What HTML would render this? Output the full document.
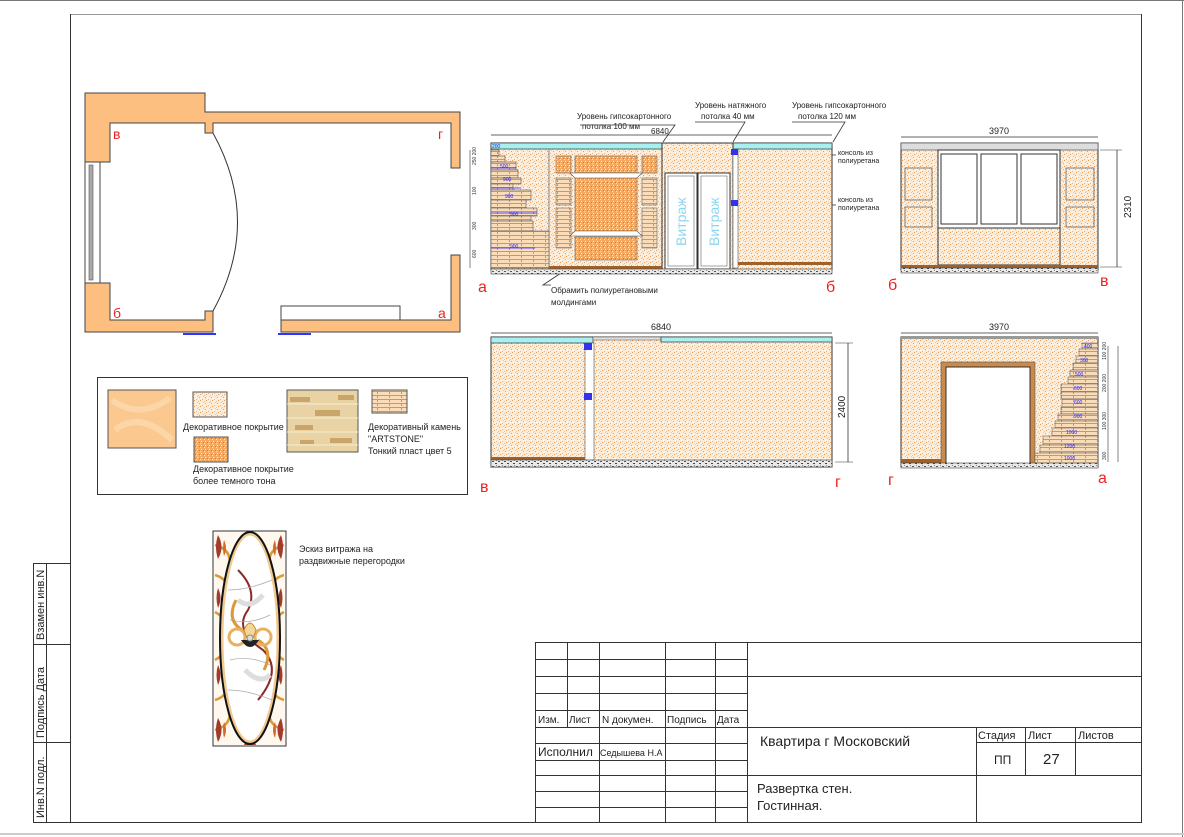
<!DOCTYPE html>
<html><head><meta charset="utf-8"><style>
html,body{margin:0;padding:0;background:#fff;}
svg{display:block;}
text{font-family:"Liberation Sans",sans-serif;}
</style></head><body>
<svg width="1184" height="837" viewBox="0 0 1184 837" xmlns="http://www.w3.org/2000/svg">
<defs>
<pattern id="sp" width="6" height="6" patternUnits="userSpaceOnUse">
<rect width="6" height="6" fill="#fcecda"/>
<rect x="1" y="1" width="1" height="1" fill="#ef9f5c"/><rect x="4" y="3" width="1" height="1" fill="#f2b27c"/><rect x="2" y="4" width="1" height="1" fill="#ec9a52"/><rect x="5" y="0" width="1" height="1" fill="#f4c49a"/><rect x="3" y="2" width="1" height="1" fill="#fff"/><rect x="0" y="5" width="1" height="1" fill="#f5bd8a"/>
</pattern>
<pattern id="dk" width="4" height="4" patternUnits="userSpaceOnUse">
<rect width="4" height="4" fill="#f5a860"/><rect x="1" y="1" width="1" height="1" fill="#fff0e0"/><rect x="3" y="2" width="1" height="1" fill="#e07a28"/><rect x="0" y="3" width="1" height="1" fill="#fde2c4"/>
</pattern>
<pattern id="st" width="12" height="4" patternUnits="userSpaceOnUse">
<rect width="12" height="4" fill="#fbdcb8"/><rect y="3" width="12" height="1" fill="#ec8f3a"/><rect x="5" y="0" width="1" height="2" fill="#ec8f3a"/>
</pattern>
<pattern id="fl" width="6" height="5" patternUnits="userSpaceOnUse">
<rect width="6" height="5" fill="#e9e9e9"/><rect x="0" y="1" width="2" height="1" fill="#555"/><rect x="3" y="3" width="2" height="1" fill="#444"/><rect x="4" y="0" width="1" height="1" fill="#888"/>
</pattern>
</defs>

<line x1="0" y1="0.5" x2="1184" y2="0.5" stroke="#777" stroke-width="1"/>
<line x1="1182.5" y1="0" x2="1182.5" y2="837" stroke="#777"/>
<line x1="0" y1="834" x2="1184" y2="834" stroke="#ccc" stroke-width="2"/>
<line x1="70" y1="14.5" x2="1142" y2="14.5" stroke="#999"/>
<line x1="70.5" y1="14" x2="70.5" y2="823" stroke="#333"/>
<line x1="1141.5" y1="14" x2="1141.5" y2="823" stroke="#333"/>
<line x1="33" y1="822.5" x2="1142" y2="822.5" stroke="#333"/>

<g stroke="#333" fill="none">
<line x1="33.5" y1="563" x2="33.5" y2="823"/><line x1="46.5" y1="563" x2="46.5" y2="823"/>
<line x1="33" y1="563.5" x2="70" y2="563.5"/><line x1="33" y1="644.5" x2="70" y2="644.5"/><line x1="33" y1="742.5" x2="70" y2="742.5"/>
</g>
<g font-size="11" fill="#222">
<text transform="translate(44,640) rotate(-90)">Взамен  инв.N</text>
<text transform="translate(44,738) rotate(-90)">Подпись  Дата</text>
<text transform="translate(44,818) rotate(-90)">Инв.N  подл.</text>
</g>

<g fill="#fdbf80" stroke="#444" stroke-width="1">
<path d="M85 93 H205 V112 H460 V168 H451 V123 H213 V133 H205 V123 H110 V162 H85 Z"/>
<path d="M85 283 H110 V320 H205 V311 H213 V332 H85 Z"/>
<path d="M281 320 H451 V255 H460 V332 H281 Z"/>
</g>
<rect x="85" y="162" width="15" height="121" fill="#fff" stroke="#444"/>
<rect x="89" y="165" width="4" height="115" fill="#aaa" stroke="#555" stroke-width="0.6"/>
<path d="M213 133 Q262 222 213 311" fill="none" stroke="#333"/>
<rect x="281" y="306" width="119" height="14" fill="#fff" stroke="#444"/>
<line x1="183" y1="334" x2="216" y2="334" stroke="#33f" stroke-width="2"/>
<line x1="278" y1="334" x2="311" y2="334" stroke="#33f" stroke-width="2"/>
<g fill="#e22" font-size="14">
<text x="113" y="139">в</text><text x="438" y="139">г</text><text x="113" y="318">б</text><text x="438" y="318">а</text>
</g>

<rect x="97.5" y="377.5" width="370" height="117" fill="#fff" stroke="#333"/>
<rect x="108" y="390" width="68" height="58" fill="#fbc98f" stroke="#555"/>
<path d="M112 400 Q140 420 170 398 M115 430 Q140 410 172 440" stroke="#fde0b5" stroke-width="6" fill="none" opacity=".6"/>
<rect x="193" y="392" width="34" height="25" fill="url(#sp)" stroke="#555"/>
<rect x="194" y="437" width="34" height="25" fill="url(#dk)" stroke="#555"/>
<rect x="287" y="390" width="71" height="62" fill="#e9d3a5" stroke="#555"/>
<g fill="#c9a56a"><rect x="290" y="397" width="20" height="5"/><rect x="315" y="410" width="25" height="6"/><rect x="295" y="425" width="18" height="5"/><rect x="330" y="438" width="22" height="5"/><rect x="338" y="395" width="16" height="5"/><rect x="300" y="440" width="14" height="4"/></g>
<g stroke="#f5ecd8" stroke-width="1"><line x1="287" y1="404" x2="358" y2="404"/><line x1="287" y1="418" x2="358" y2="418"/><line x1="287" y1="432" x2="358" y2="432"/><line x1="287" y1="445" x2="358" y2="445"/></g>
<rect x="372" y="390" width="35" height="23" fill="url(#st)" stroke="#555"/>
<g font-size="9" fill="#222">
<text x="183" y="430">Декоративное покрытие</text>
<text x="193" y="472">Декоративное покрытие</text>
<text x="193" y="484">более темного тона</text>
<text x="368" y="430">Декоративный камень</text>
<text x="368" y="442">"ARTSTONE"</text>
<text x="368" y="454">Тонкий пласт цвет 5</text>
</g>

<g font-size="8" fill="#222">
<text x="577" y="119">Уровень гипсокартонного</text>
<text x="582" y="129">потолка 100 мм</text>
<text x="651" y="134">6840</text>
<text x="695" y="108">Уровень натяжного</text>
<text x="701" y="119">потолка 40 мм</text>
<text x="792" y="108">Уровень гипсокартонного</text>
<text x="798" y="119">потолка 120 мм</text>
<text x="838" y="155" font-size="7">консоль из</text>
<text x="838" y="163" font-size="7">полиуретана</text>
<text x="838" y="202" font-size="7">консоль из</text>
<text x="838" y="210" font-size="7">полиуретана</text>
<text x="551" y="293">Обрамить полиуретановыми</text>
<text x="551" y="305">молдингами</text>
</g>
<g stroke="#333" fill="none" stroke-width="0.8">
<line x1="491" y1="135" x2="832" y2="135"/>
<path d="M580 125 H675 L663 142 M695 122 H745 L733 142 M792 122 H845 L833 142"/>
<line x1="736" y1="155" x2="836" y2="155"/><line x1="736" y1="205" x2="836" y2="205"/>
<path d="M570 267 L543 285 H551"/>
</g>
<rect x="491" y="143" width="341" height="127" fill="url(#sp)" stroke="#333"/>
<rect x="491" y="143" width="171" height="6" fill="#a8f0f0" stroke="#333" stroke-width=".7"/>
<rect x="733" y="143" width="99" height="6" fill="#a8f0f0" stroke="#333" stroke-width=".7"/>
<line x1="549" y1="149" x2="549" y2="268" stroke="#888"/>
<g fill="url(#dk)" stroke="#777" stroke-width=".7">
<rect x="556" y="156" width="15" height="17"/><rect x="575" y="156" width="62" height="17"/><rect x="642" y="156" width="15" height="17"/>
<rect x="575" y="173" width="62" height="63"/><rect x="575" y="237" width="62" height="23"/>
</g>
<g fill="url(#st)" stroke="#777" stroke-width=".7">
<rect x="556" y="178" width="15" height="27"/><rect x="556" y="208" width="15" height="40"/>
<rect x="642" y="178" width="15" height="27"/><rect x="642" y="208" width="15" height="40"/>
</g>
<path d="M570 173 H642 L637 178 H575 Z M570 236 H642 L637 231 H575 Z" fill="#fff" stroke="#555" stroke-width=".6"/>
<g fill="url(#st)" stroke="#555" stroke-width=".6">
<rect x="491" y="150" width="8" height="6"/><rect x="491" y="156" width="14" height="6"/><rect x="491" y="162" width="25" height="8"/>
<rect x="491" y="170" width="27" height="8"/><rect x="491" y="178" width="30" height="6"/><rect x="491" y="184" width="22" height="6"/>
<rect x="491" y="190" width="40" height="10"/><rect x="491" y="200" width="35" height="8"/><rect x="491" y="208" width="46" height="8"/>
<rect x="491" y="216" width="40" height="5"/><rect x="491" y="221" width="42" height="10"/><rect x="491" y="231" width="58" height="37"/>
</g>
<g stroke="#22f" stroke-width=".7"><line x1="491" y1="168" x2="516" y2="168"/><line x1="491" y1="188" x2="521" y2="188"/><line x1="491" y1="213" x2="537" y2="213"/><line x1="491" y1="248" x2="535" y2="248"/></g>
<g font-size="5" fill="#22f"><text x="492" y="148">200</text><text x="500" y="168">500</text><text x="503" y="181">900</text><text x="505" y="198">900</text><text x="510" y="216">900</text><text x="510" y="248">900</text></g>
<g font-size="5" fill="#333"><text transform="translate(476,165) rotate(-90)">250 200</text><text transform="translate(476,195) rotate(-90)">100</text><text transform="translate(476,230) rotate(-90)">300</text><text transform="translate(476,258) rotate(-90)">600</text></g>
<line x1="470" y1="150" x2="470" y2="268" stroke="#333" stroke-width=".6"/>
<rect x="662" y="143" width="71" height="127" fill="url(#sp)" stroke="#333"/>
<rect x="665" y="173" width="32" height="96" fill="#fff" stroke="#333"/><rect x="668" y="176" width="26" height="90" fill="none" stroke="#666" stroke-width=".6"/>
<rect x="698" y="173" width="32" height="96" fill="#fff" stroke="#333"/><rect x="701" y="176" width="26" height="90" fill="none" stroke="#666" stroke-width=".6"/>
<g fill="#8cd6ee" font-size="14"><text transform="translate(686,246) rotate(-90)">Витраж</text><text transform="translate(719,246) rotate(-90)">Витраж</text></g>
<rect x="733" y="149" width="5" height="119" fill="#fff" stroke="#555" stroke-width=".6"/>
<rect x="731" y="149" width="7" height="6" fill="#33e"/><rect x="731" y="200" width="7" height="6" fill="#33e"/>
<rect x="549" y="266" width="113" height="3" fill="#a0602a"/><rect x="738" y="262" width="94" height="3" fill="#a0602a"/>
<rect x="491" y="269" width="341" height="5" fill="url(#fl)" stroke="#444" stroke-width=".6"/>
<g fill="#e22" font-size="16"><text x="478" y="292">а</text><text x="826" y="292">б</text></g>

<text x="989" y="134" font-size="9" fill="#222">3970</text>
<line x1="901" y1="137" x2="1098" y2="137" stroke="#333" stroke-width=".8"/>
<rect x="901" y="143" width="197" height="127" fill="url(#sp)" stroke="#333"/>
<rect x="901" y="143" width="197" height="7" fill="#ddd" stroke="#555" stroke-width=".7"/>
<rect x="938" y="150" width="122" height="115" fill="url(#sp)" stroke="#333"/>
<rect x="938" y="150" width="122" height="78" fill="#fff" stroke="#333"/>
<rect x="941" y="154" width="36" height="70" fill="#fff" stroke="#333"/><rect x="981" y="154" width="36" height="70" fill="#fff" stroke="#333"/><rect x="1021" y="154" width="36" height="70" fill="#fff" stroke="#333"/>
<g fill="none" stroke="#555" stroke-width=".7"><rect x="905" y="168" width="27" height="32"/><rect x="905" y="207" width="27" height="20"/><rect x="1066" y="168" width="28" height="32"/><rect x="1066" y="207" width="28" height="20"/></g>
<rect x="901" y="265" width="197" height="3" fill="#a0602a"/>
<rect x="901" y="268" width="197" height="5" fill="url(#fl)" stroke="#444" stroke-width=".6"/>
<line x1="1117" y1="150" x2="1117" y2="267" stroke="#333" stroke-width=".8"/>
<line x1="1100" y1="150" x2="1122" y2="150" stroke="#333" stroke-width=".6"/><line x1="1100" y1="267" x2="1122" y2="267" stroke="#333" stroke-width=".6"/>
<text transform="translate(1131,218) rotate(-90)" font-size="10" fill="#222">2310</text>
<g fill="#e22" font-size="16"><text x="888" y="290">б</text><text x="1100" y="286">в</text></g>

<text x="651" y="330" font-size="9" fill="#222">6840</text>
<line x1="491" y1="333" x2="832" y2="333" stroke="#333" stroke-width=".8"/>
<rect x="491" y="337" width="341" height="130" fill="url(#sp)" stroke="#333"/>
<rect x="491" y="337" width="102" height="6" fill="#a8f0f0" stroke="#333" stroke-width=".7"/>
<rect x="593" y="337" width="68" height="3" fill="#ddd" stroke="#555" stroke-width=".5"/>
<rect x="661" y="337" width="171" height="5" fill="#a8f0f0" stroke="#333" stroke-width=".7"/>
<rect x="585" y="343" width="9" height="117" fill="#fff" stroke="#555" stroke-width=".6"/>
<rect x="584" y="343" width="8" height="7" fill="#33e"/><rect x="584" y="393" width="8" height="7" fill="#33e"/>
<rect x="491" y="457" width="94" height="3" fill="#a0602a"/><rect x="594" y="461" width="238" height="3" fill="#a0602a"/>
<rect x="491" y="460" width="341" height="7" fill="url(#fl)" stroke="#444" stroke-width=".6"/>
<line x1="848" y1="343" x2="848" y2="462" stroke="#333" stroke-width=".8"/>
<line x1="835" y1="343" x2="853" y2="343" stroke="#333" stroke-width=".6"/><line x1="835" y1="462" x2="853" y2="462" stroke="#333" stroke-width=".6"/>
<text transform="translate(845,418) rotate(-90)" font-size="10" fill="#222">2400</text>
<g fill="#e22" font-size="16"><text x="480" y="492">в</text><text x="835" y="487">г</text></g>

<text x="989" y="330" font-size="9" fill="#222">3970</text>
<line x1="901" y1="333" x2="1098" y2="333" stroke="#333" stroke-width=".8"/>
<rect x="901" y="337" width="197" height="130" fill="url(#sp)" stroke="#333"/>
<rect x="901" y="337" width="197" height="2" fill="#999"/>
<rect x="941" y="362" width="94" height="102" fill="#c98a4a" stroke="#555" stroke-width=".6"/>
<rect x="946" y="367" width="84" height="97" fill="#fff" stroke="#333"/>
<rect x="901" y="459" width="40" height="4" fill="#a0602a"/>
<g fill="url(#st)" stroke="#555" stroke-width=".5">
<rect x="1082" y="343" width="16" height="6"/><rect x="1079" y="349" width="19" height="7"/><rect x="1076" y="356" width="22" height="7"/>
<rect x="1073" y="363" width="25" height="7"/><rect x="1070" y="370" width="28" height="7"/><rect x="1068" y="377" width="30" height="7"/>
<rect x="1061" y="384" width="37" height="8"/><rect x="1061" y="392" width="37" height="7"/><rect x="1062" y="399" width="36" height="8"/>
<rect x="1061" y="407" width="37" height="7"/><rect x="1058" y="414" width="40" height="7"/><rect x="1055" y="421" width="43" height="7"/>
<rect x="1052" y="428" width="46" height="8"/><rect x="1043" y="436" width="55" height="9"/><rect x="1040" y="445" width="58" height="8"/><rect x="1035" y="453" width="63" height="10"/>
</g>
<g font-size="5" fill="#22f"><text x="1084" y="348">400</text><text x="1080" y="362">300</text><text x="1075" y="376">500</text><text x="1074" y="390">600</text><text x="1074" y="404">600</text><text x="1074" y="418">900</text><text x="1066" y="434">1000</text><text x="1064" y="448">1200</text><text x="1064" y="460">1000</text></g>
<g stroke="#333" stroke-width=".6"><line x1="1108" y1="346" x2="1108" y2="462"/><line x1="1118" y1="346" x2="1118" y2="462"/></g>
<g font-size="5" fill="#333"><text transform="translate(1106,360) rotate(-90)">100 200</text><text transform="translate(1106,392) rotate(-90)">200 200</text><text transform="translate(1106,430) rotate(-90)">100 300</text><text transform="translate(1106,460) rotate(-90)">300</text></g>
<rect x="901" y="463" width="197" height="5" fill="url(#fl)" stroke="#444" stroke-width=".6"/>
<g fill="#e22" font-size="16"><text x="888" y="485">г</text><text x="1098" y="483">а</text></g>

<!-- STAINED GLASS -->
<rect x="213" y="531" width="73" height="215" fill="#fff8ee" stroke="#333"/>
<g fill="none" stroke="#d99a3a" stroke-width="2.5">
<path d="M215 545 q18 5 14 22 M284 545 q-18 5 -14 22 M215 730 q18 -5 14 -22 M284 730 q-18 -5 -14 -22"/>
<path d="M215 575 q16 5 12 20 M284 575 q-16 5 -12 20 M215 700 q16 -5 12 -20 M284 700 q-16 -5 -12 -20"/>
<path d="M215 612 q15 8 14 26 q0 14 -14 22 M284 612 q-15 8 -14 26 q0 14 14 22"/>
</g>
<g fill="#a33a2a">
<path d="M218 535 q7 12 0 24 q-4-12 0-24z"/><path d="M281 535 q-7 12 0 24 q4-12 0-24z"/>
<path d="M218 718 q7 12 0 24 q-4-12 0-24z"/><path d="M281 718 q-7 12 0 24 q4-12 0-24z"/>
<path d="M244 533 h12 l-6 12z"/><path d="M244 745 h12 l-6 -12z"/>
<path d="M218 588 q5 10 0 20 q-3-10 0-20z M281 588 q-5 10 0 20 q3-10 0-20z M218 665 q5 10 0 20 q-3-10 0-20z M281 665 q-5 10 0 20 q3-10 0-20z"/>
</g>
<g fill="#d4692a"><path d="M224 540 q4 8 0 16 q-2-8 0-16z M275 540 q-4 8 0 16 q2-8 0-16z M224 722 q4 8 0 16 q-2-8 0-16z M275 722 q-4 8 0 16 q2-8 0-16z"/></g>
<ellipse cx="250" cy="638" rx="28" ry="104" fill="#fff" stroke="#f0c890" stroke-width="3"/>
<ellipse cx="250" cy="638" rx="30" ry="106" fill="none" stroke="#111" stroke-width="2"/>
<path d="M238 570 q20 20 10 40 q-15 20 15 40 q20 20 -5 50" fill="none" stroke="#8a2a2a" stroke-width="2"/>
<path d="M238 600 q12 10 25 -5" stroke="#ddd" stroke-width="5" fill="none"/>
<path d="M245 670 q15 15 25 5" stroke="#ddd" stroke-width="5" fill="none"/>
<g stroke="#aaa" fill="none" stroke-width=".7"><path d="M228 590 q20 0 44 -10 M228 690 q20 0 44 10 M230 620 q20 5 40 -5 M230 660 q20 -5 40 5"/></g>
<path d="M236 600 q-10 20 6 30 M264 670 q10 -20 -6 -30" fill="none" stroke="#d99a3a" stroke-width="3"/>
<circle cx="237" cy="637" r="8" fill="none" stroke="#e8b060" stroke-width="3"/>
<circle cx="263" cy="637" r="8" fill="none" stroke="#e8b060" stroke-width="3"/>
<path d="M244 630 q6 -14 12 0 q-6 20 -12 0z" fill="#f4d59a" stroke="#c98a30"/>
<path d="M241 640 q9 14 18 0" fill="#222"/>
<circle cx="250" cy="638" r="3" fill="#ddd" stroke="#888"/>
<text x="299" y="552" font-size="9" fill="#222">Эскиз витража на</text>
<text x="299" y="564" font-size="9" fill="#222">раздвижные перегородки</text>

<g stroke="#333" fill="none" stroke-width="1">
<rect x="535.5" y="642.5" width="606" height="180"/>
<line x1="535" y1="659.5" x2="747" y2="659.5"/><line x1="535" y1="676.5" x2="1142" y2="676.5"/>
<line x1="535" y1="693.5" x2="747" y2="693.5"/><line x1="535" y1="710.5" x2="747" y2="710.5"/>
<line x1="535" y1="727.5" x2="1142" y2="727.5"/><line x1="535" y1="743.5" x2="747" y2="743.5"/>
<line x1="535" y1="760.5" x2="747" y2="760.5"/><line x1="535" y1="775.5" x2="1142" y2="775.5"/>
<line x1="535" y1="791.5" x2="747" y2="791.5"/><line x1="535" y1="807.5" x2="747" y2="807.5"/>
<line x1="976" y1="742.5" x2="1142" y2="742.5"/>
<line x1="567.5" y1="642" x2="567.5" y2="727"/>
<line x1="599.5" y1="642" x2="599.5" y2="822"/>
<line x1="665.5" y1="642" x2="665.5" y2="822"/>
<line x1="715.5" y1="642" x2="715.5" y2="822"/>
<line x1="747.5" y1="642" x2="747.5" y2="822"/>
<line x1="976.5" y1="727" x2="976.5" y2="822"/>
<line x1="1025.5" y1="727" x2="1025.5" y2="775"/>
<line x1="1075.5" y1="727" x2="1075.5" y2="775"/>
</g>
<g fill="#222">
<text x="538" y="723" font-size="10">Изм.</text>
<text x="569" y="723" font-size="10">Лист</text>
<text x="602" y="723" font-size="10">N докумен.</text>
<text x="667" y="723" font-size="10">Подпись</text>
<text x="717" y="723" font-size="10">Дата</text>
<text x="538" y="756" font-size="12">Исполнил</text>
<text x="600" y="756" font-size="9">Седышева Н.А</text>
<text x="760" y="746" font-size="14">Квартира г Московский</text>
<text x="978" y="739" font-size="11">Стадия</text>
<text x="1028" y="739" font-size="11">Лист</text>
<text x="1078" y="739" font-size="11">Листов</text>
<text x="994" y="764" font-size="12">ПП</text>
<text x="1043" y="764" font-size="15">27</text>
<text x="757" y="793" font-size="13">Развертка стен.</text>
<text x="757" y="810" font-size="13">Гостинная.</text>
</g>
</svg>
</body></html>
